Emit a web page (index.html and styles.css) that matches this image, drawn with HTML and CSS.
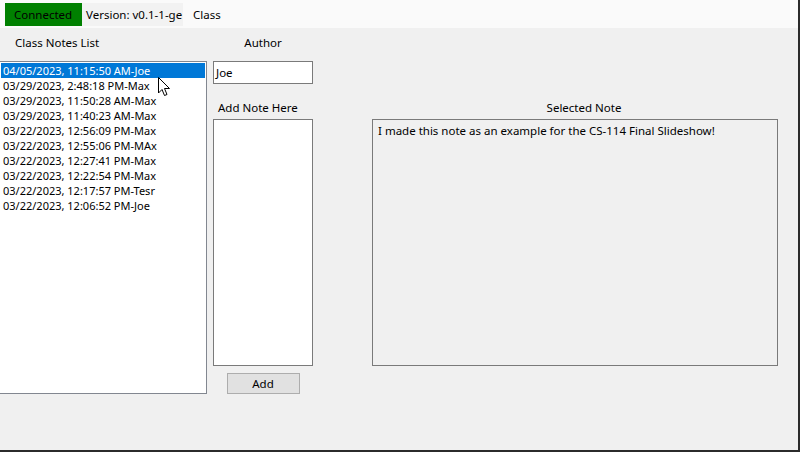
FILE: index.html
```html
<!DOCTYPE html>
<html>
<head>
<meta charset="utf-8">
<link rel="stylesheet" href="styles.css">
</head>
<body>
<div class="window">
  <div class="status">
    <span class="conn">Connected</span>
    <span class="ver">Version: v0.1-1-ge</span>
    <span class="cls">Class</span>
  </div>
  <div class="main">
    <div class="lbl lbl-list">Class Notes List</div>
    <div class="listbox">
      <div class="item sel">04/05/2023, 11:15:50 AM-Joe</div>
      <div class="item">03/29/2023, 2:48:18 PM-Max</div>
      <div class="item">03/29/2023, 11:50:28 AM-Max</div>
      <div class="item">03/29/2023, 11:40:23 AM-Max</div>
      <div class="item">03/22/2023, 12:56:09 PM-Max</div>
      <div class="item">03/22/2023, 12:55:06 PM-MAx</div>
      <div class="item">03/22/2023, 12:27:41 PM-Max</div>
      <div class="item">03/22/2023, 12:22:54 PM-Max</div>
      <div class="item">03/22/2023, 12:17:57 PM-Tesr</div>
      <div class="item">03/22/2023, 12:06:52 PM-Joe</div>
      <svg class="cursor" width="13" height="20" viewBox="0 0 13 20"><path d="M0.5 0.5 L0.5 16 L4 12.5 L6.5 18.5 L9 17.5 L6.5 11.5 L11.5 11.5 Z" fill="#fff" stroke="#000" stroke-width="1" stroke-linejoin="miter"/></svg>
    </div>
    <div class="lbl lbl-author">Author</div>
    <div class="textbox author">Joe</div>
    <div class="lbl lbl-add">Add Note Here</div>
    <div class="textbox addnote"></div>
    <div class="btnwrap"><div class="btn">Add</div></div>
    <div class="lbl lbl-sel">Selected Note</div>
    <div class="selbox">I made this note as an example for the CS-114 Final Slideshow!</div>
  </div>
</div>
</body>
</html>
```
FILE: styles.css
```css
html, body {
  margin: 0;
  padding: 0;
}
body {
  width: 800px;
  height: 452px;
  overflow: hidden;
  font-family: "Noto Sans", "Open Sans", sans-serif;
  font-size: 11.5px;
  color: #000;
}
.window {
  box-sizing: border-box;
  width: 800px;
  height: 452px;
  background: #f0f0f0;
  border-right: 2px solid #2b2b2b;
  border-bottom: 2px solid #2b2b2b;
  overflow: hidden;
}
.status {
  height: 28px;
  background: #fafafa;
  display: flex;
  align-items: flex-start;
  padding-top: 3px;
  padding-left: 5px;
  box-sizing: border-box;
  white-space: nowrap;
}
.conn {
  background: #008000;
  width: 77px;
  height: 23px;
  line-height: 23px;
  padding-left: 9px;
  box-sizing: border-box;
}
.ver {
  background: #f2f2f2;
  width: 101px;
  height: 23px;
  line-height: 23px;
  padding-left: 4px;
  box-sizing: border-box;
  overflow: hidden;
}
.cls {
  height: 23px;
  line-height: 23px;
  padding-left: 10px;
}
.main {
  display: grid;
  grid-template-columns: 208px 6px 100px 59px 406px;
  grid-template-rows: 33px 23px 35px 247px 7px 21px;
  margin-left: -1px;
}
.lbl {
  line-height: 14px;
  white-space: nowrap;
}
.lbl-list {
  grid-column: 1;
  grid-row: 1;
  padding-top: 8px;
  padding-left: 16px;
}
.lbl-author {
  grid-column: 3;
  grid-row: 1;
  padding-top: 8px;
  text-align: center;
}
.lbl-add {
  grid-column: 3;
  grid-row: 3;
  padding-top: 17px;
  padding-left: 5px;
}
.lbl-sel {
  grid-column: 5;
  grid-row: 3;
  padding-top: 17px;
  padding-left: 18px;
  text-align: center;
}
.listbox {
  grid-column: 1;
  grid-row: 2 / 7;
  background: #fff;
  border: 1px solid #828790;
  box-sizing: border-box;
  padding: 1px;
  position: relative;
}
.item {
  height: 15px;
  line-height: 15px;
  padding-left: 2px;
  white-space: nowrap;
  font-size: 11px;
}
.item.sel {
  background: #0078d7;
  color: #fff;
}
.cursor {
  position: absolute;
  left: 158px;
  top: 15px;
}
.textbox {
  grid-column: 3;
  background: #fff;
  border: 1px solid #7a7a7a;
  box-sizing: border-box;
}
.author {
  grid-row: 2;
  line-height: 21px;
  padding-left: 2px;
}
.addnote {
  grid-row: 4;
}
.btnwrap {
  grid-column: 3;
  grid-row: 6;
  display: flex;
  justify-content: center;
}
.btn {
  width: 73px;
  height: 21px;
  box-sizing: border-box;
  background: #e1e1e1;
  border: 1px solid #adadad;
  text-align: center;
  line-height: 19px;
}
.selbox {
  grid-column: 5;
  grid-row: 4;
  border: 1px solid #7a7a7a;
  box-sizing: border-box;
  background: #f0f0f0;
  padding: 3px 5px;
  line-height: 15px;
}
```
